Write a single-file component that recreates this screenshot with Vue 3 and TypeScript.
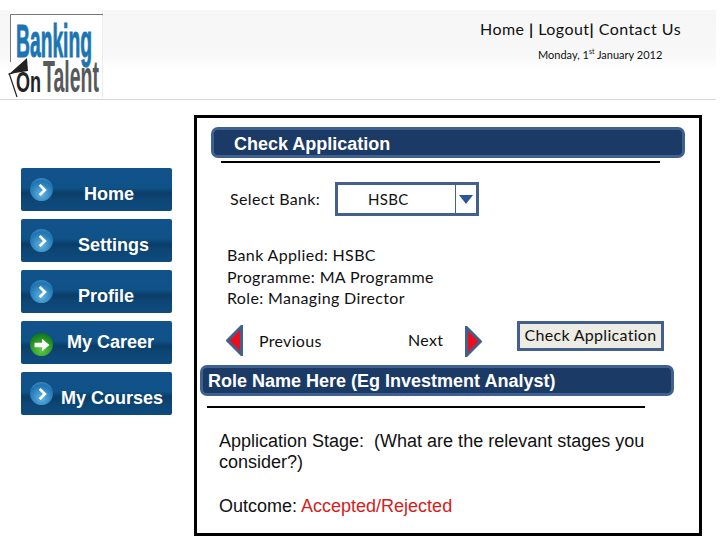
<script setup lang="ts">
interface NavItem { label: string; cls: string; green?: boolean }
const nav: NavItem[] = [
  { label: 'Home', cls: 'n-home' },
  { label: 'Settings', cls: 'n-settings' },
  { label: 'Profile', cls: 'n-profile' },
  { label: 'My Career', cls: 'n-career', green: true },
  { label: 'My Courses', cls: 'n-courses' },
]
</script>

<template>
  <div class="page">
    <header class="header">
      <div class="logo">
        <svg width="93" height="84" viewBox="0 0 93 84">
          <path d="M0.5 48V0.5H93" fill="none" stroke="#777" stroke-width="1" />
          <text x="6" y="43" textLength="76" lengthAdjust="spacingAndGlyphs" class="logo-blue">Banking</text>
          <text y="78" class="logo-gray"><tspan x="6" textLength="25" lengthAdjust="spacingAndGlyphs" class="logo-dark">On</tspan><tspan x="33" textLength="56" lengthAdjust="spacingAndGlyphs">Talent</tspan></text>
          <path d="M17 44L-2 61L5 59L18 57Z" fill="#222" />
          <path d="M-1 59L7 83" stroke="#222" stroke-width="1.2" fill="none" />
        </svg>
      </div>
      <div class="top">
        <div class="links">Home <b>|</b> Logout<b>|</b> Contact Us</div>
        <div class="date">Monday, 1<sup>st</sup> January 2012</div>
      </div>
    </header>

    <div class="main">
      <nav class="side">
        <a v-for="n in nav" :key="n.label" class="nav" :class="n.cls">
          <span class="orb" :class="{ green: n.green }">
            <svg width="16" height="16" viewBox="0 0 14 14">
              <path v-if="n.green" d="M0.5 5H7V1.5L13.5 7L7 12.5V9H0.5Z" fill="#fff" />
              <path v-else d="M5 2.5L9.5 7L5 11.5" fill="none" stroke="#fff" stroke-width="2.4" />
            </svg>
          </span>
          <span class="nav-label">{{ n.label }}</span>
        </a>
      </nav>

      <section class="panel">
        <div class="bar bar-check">Check Application</div>
        <div class="rule rule-check"></div>

        <div class="select-row">
          <span class="select-label">Select Bank:</span>
          <div class="select">
            <span class="select-value">HSBC</span>
            <span class="select-btn"><i class="tri"></i></span>
          </div>
        </div>

        <div class="info">
          <div>Bank Applied: HSBC</div>
          <div>Programme: MA Programme</div>
          <div>Role: Managing Director</div>
        </div>

        <div class="pager">
          <svg class="arrow" width="17" height="31" viewBox="0 0 17 31"><path d="M15.5 1.5V29.5L1.5 15.5Z" fill="#e8101e" stroke="#43608c" stroke-width="3" /></svg>
          <span class="prev">Previous</span>
          <span class="next">Next</span>
          <svg class="arrow" width="17" height="31" viewBox="0 0 17 31"><path d="M1.5 1.5V29.5L15.5 15.5Z" fill="#e8101e" stroke="#43608c" stroke-width="3" /></svg>
          <button class="check-btn">Check Application</button>
        </div>

        <div class="bar bar-role">Role Name Here (Eg Investment Analyst)</div>
        <div class="rule rule-role"></div>

        <div class="stage">
          <p>Application Stage:&nbsp; (What are the relevant stages you consider?)</p>
          <p class="outcome">Outcome: <span class="red">Accepted/Rejected</span></p>
        </div>
      </section>
    </div>
  </div>
</template>

<style>
html, body { margin: 0; background: #fff; }
</style>

<style scoped>
.page { width: 720px; height: 540px; overflow: hidden; position: relative; background: #fff; font-family: "Liberation Sans", Arial, sans-serif; }

.header { height: 89px; padding-left: 10px; position: relative; top: 10px; display: flex;
  border-bottom: 1px solid #d6d6d6; width: 706px;
  background: linear-gradient(#f6f6f6 0, #f8f8f8 50%, #fff 68%); }
.logo { width: 93px; height: 88px; box-sizing: border-box; padding-top: 4px; background: #fff; flex: none; border-right: 1px solid #eee; }
.logo svg { display: block; overflow: visible; }
.logo-blue { font: bold 46px "Liberation Sans", sans-serif; fill: #1b75b4; stroke: #1b75b4; stroke-width: 1px; }
.logo-gray { font: bold 44px "Liberation Sans", sans-serif; fill: #58595b; }
.logo-dark { font-size: 29px; fill: #222; }

.top { flex: 1; font-family: Lato, sans-serif; color: #111; position: relative; }
.links { position: absolute; left: 377px; top: 9px; font-size: 16px; white-space: nowrap; letter-spacing: .45px; }
.links b { font-weight: 700; }
.date { position: absolute; left: 435px; top: 38px; font-size: 11px; white-space: nowrap; }
.date sup { font-size: 7px; line-height: 0; }

.main { position: absolute; top: 115px; left: 0; width: 720px; height: 425px; }

.side { position: absolute; left: 21px; top: 53px; display: flex; flex-direction: column; gap: 8px; width: 151px; }
.nav { height: 43px; border-radius: 2px; position: relative; display: block; color: #fff; font-weight: 700; font-size: 18px;
  background: linear-gradient(#11528a 0, #0f5288 46%, #0b3d68 58%, #0d4675 74%, #0e4b7f 100%); }
.nav-label { position: absolute; line-height: 20px; white-space: nowrap; }
.n-home .nav-label { left: 63px; top: 16px; }
.n-settings .nav-label { left: 57px; top: 16px; }
.n-profile .nav-label { left: 57px; top: 16px; }
.n-career .nav-label { left: 46px; top: 11px; }
.n-courses .nav-label { left: 40px; top: 16px; }
.orb { position: absolute; left: 9px; top: 10px; width: 23px; height: 23px; border-radius: 50%; display: flex; align-items: center; justify-content: center;
  background: radial-gradient(circle at 50% 70%, #62b4e0, #1f74b3 65%, #5a9ac8); }
.orb.green { background: radial-gradient(circle at 50% 75%, #63cb45, #17821f 70%, #0c5a15); top: 12px; }

.panel { position: absolute; left: 194px; top: 0; border: 3px solid #000; width: 502px; height: 415px; }

.bar { position: absolute; box-sizing: border-box; height: 31px; background: #1c3a66; border: 3px solid #3f6190; border-radius: 7px; color: #fff; font-weight: 700; font-size: 18px; line-height: 26px; white-space: nowrap; }
.bar-check { left: 14px; top: 9px; width: 474px; padding-left: 20px; line-height: 28px; }
.bar-role { left: 3px; top: 247px; width: 474px; padding-left: 5px; }

.rule { position: absolute; height: 2px; background: #000; }
.rule-check { left: 24px; top: 43px; width: 439px; }
.rule-role { left: 10px; top: 288px; width: 438px; }

.select-row { position: absolute; left: 33px; top: 64px; display: flex; align-items: flex-start; font-family: Lato, sans-serif; font-size: 16px; color: #111; }
.select-label { width: 105px; letter-spacing: .35px; line-height: 34px; }
.select { width: 144px; height: 34px; box-sizing: border-box; border: 3px solid #43608c; display: flex; background: #fff; }
.select-value { flex: 1; padding-left: 30px; line-height: 28px; font-size: 15px; letter-spacing: .3px; }
.select-btn { width: 20px; border-left: 1px solid #43608c; display: flex; align-items: center; justify-content: center; }
.tri { width: 0; height: 0; border-left: 7.5px solid transparent; border-right: 7.5px solid transparent; border-top: 9px solid #2f5597; }

.info { position: absolute; left: 30px; top: 126px; font-family: Lato, sans-serif; font-size: 16px; line-height: 21.5px; color: #111; letter-spacing: .35px; white-space: nowrap; }

.pager { position: absolute; left: 30px; top: 202px; width: 440px; height: 36px; font-family: Lato, sans-serif; font-size: 16px; color: #111; letter-spacing: .3px; }
.pager .arrow { position: absolute; top: 5px; left: -1px; }
.pager .arrow:nth-of-type(2) { left: 238px; top: 6px; }
.prev { position: absolute; left: 32px; top: 11px; }
.next { position: absolute; left: 181px; top: 10px; }
.check-btn { position: absolute; left: 290px; top: 1px; width: 147px; height: 30px; border: 3px solid #43608c; background: #ecebe4; padding: 0 0 3px; font: 16px Lato, sans-serif; color: #111; letter-spacing: .3px; white-space: nowrap; }

.stage { position: absolute; left: 22px; top: 313px; width: 440px; font-size: 18px; line-height: 21px; color: #111; }
.stage p { margin: 0; }
.outcome { margin-top: 23px !important; }
.red { color: #d42020; }
</style>
